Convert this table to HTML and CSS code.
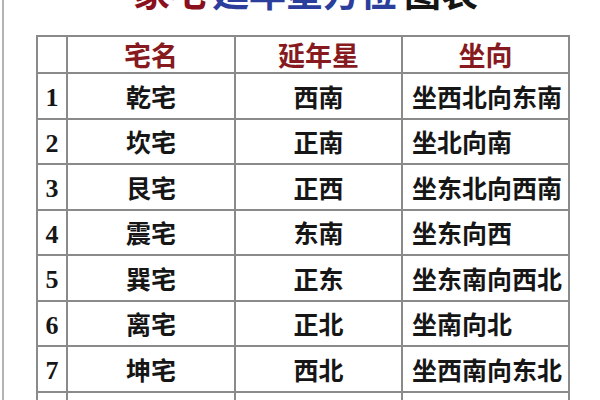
FILE: index.html
```html
<!DOCTYPE html>
<html lang="zh-CN">
<head>
<meta charset="utf-8">
<title>家宅延年星方位图表</title>
<link rel="stylesheet" href="styles.css">
</head>
<body>
<div class="frame">
  <h1 class="title"><span class="t-red">家宅</span><span class="t-blue">延年星方位</span><span class="t-black">图表</span></h1>
  <table class="chart">
    <colgroup>
      <col class="c-num"><col class="c-name"><col class="c-star"><col class="c-dir">
    </colgroup>
    <thead>
      <tr class="head"><th></th><th>宅名</th><th>延年星</th><th>坐向</th></tr>
    </thead>
    <tbody>
      <tr><td class="num">1</td><td class="mid">乾宅</td><td class="mid">西南</td><td class="left">坐西北向东南</td></tr>
      <tr><td class="num">2</td><td class="mid">坎宅</td><td class="mid">正南</td><td class="left">坐北向南</td></tr>
      <tr><td class="num">3</td><td class="mid">艮宅</td><td class="mid">正西</td><td class="left">坐东北向西南</td></tr>
      <tr><td class="num">4</td><td class="mid">震宅</td><td class="mid">东南</td><td class="left">坐东向西</td></tr>
      <tr><td class="num">5</td><td class="mid">巽宅</td><td class="mid">正东</td><td class="left">坐东南向西北</td></tr>
      <tr><td class="num">6</td><td class="mid">离宅</td><td class="mid">正北</td><td class="left">坐南向北</td></tr>
      <tr><td class="num">7</td><td class="mid">坤宅</td><td class="mid">西北</td><td class="left">坐西南向东北</td></tr>
      <tr><td class="num">8</td><td class="mid">兑宅</td><td class="mid">东北</td><td class="left">坐西向东</td></tr>
    </tbody>
  </table>
</div>
</body>
</html>
```
FILE: styles.css
```css
html, body {
  margin: 0;
  padding: 0;
  background: #ffffff;
}
body {
  width: 600px;
  height: 400px;
  overflow: hidden;
}
.frame {
  display: flow-root;
  margin-left: 2px;
  height: 400px;
  border-left: 2px solid #b3b3b3;
  font-family: "Noto Sans CJK SC", "Noto Sans", sans-serif;
}
.title {
  margin: -28px 0 0 0;
  padding: 0 0 0 129px;
  font-size: 37px;
  line-height: 38px;
  font-weight: 700;
  white-space: nowrap;
}
.t-red { color: #8a1020; margin-right: 5px; }
.t-blue { color: #2b3e9c; margin-right: 7px; }
.t-black { color: #151515; }
.chart {
  margin: 25px 0 0 32px;
  border-collapse: collapse;
  table-layout: fixed;
  width: 532px;
}
.c-num { width: 30px; }
.c-name { width: 168px; }
.c-star { width: 167px; }
.c-dir { width: 167px; }
.chart th, .chart td {
  border: 2px solid #8a8a8a;
  padding: 0;
  white-space: nowrap;
  overflow: hidden;
}
.head th {
  height: 34px;
  font-size: 27px;
  line-height: 30px;
  font-weight: 700;
  color: #861a1e;
  text-align: center;
  padding-top: 1px;
}
.chart td {
  height: 43.5px;
  font-size: 25px;
  line-height: 30px;
  font-weight: 700;
  color: #161616;
  vertical-align: middle;
}
.chart td.num {
  height: 38.5px;
  font-family: "Liberation Serif", serif;
  font-size: 26px;
  text-align: center;
  padding-top: 5px;
}
.chart td.mid { text-align: center; }
.chart td.left { text-align: left; padding-left: 9px; }
```
